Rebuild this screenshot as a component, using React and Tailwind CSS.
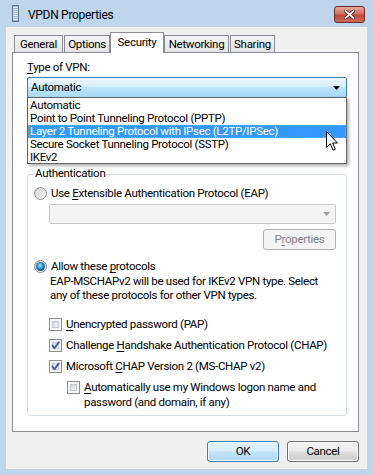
import React from "react";

function U({ children }) {
  return <span className="underline decoration-1 underline-offset-[2px]">{children}</span>;
}

function Radio({ checked }) {
  return (
    <span className="w-[13px] h-[13px] rounded-full border border-[#8e8f8f] bg-[linear-gradient(135deg,#c9cbcd,#fbfbfb)] flex items-center justify-center shrink-0">
      {checked ? (
        <span className="w-[9px] h-[9px] rounded-full bg-[radial-gradient(circle_at_45%_40%,#c8eeff_0%,#3fa4e6_30%,#1a5a9a_65%,#24476e_100%)]" />
      ) : (
        <span className="w-[9px] h-[9px] rounded-full bg-[linear-gradient(135deg,#d4d5d6,#f7f7f7)]" />
      )}
    </span>
  );
}

function Check({ checked }) {
  return (
    <span className="relative w-[13px] h-[13px] border border-[#8e8f8f] bg-[#f6f6f6] p-[2px] shrink-0 flex">
      <span className="flex-1 border border-[#c5c8cc] bg-[linear-gradient(135deg,#d3d6da,#f8f8f8)]" />
      {checked ? (
        <svg className="absolute left-0 top-0" width="11" height="11" viewBox="0 0 11 11">
          <path d="M2.5 5.5 L4.5 8.2 L8.8 2.4" fill="none" stroke="#3f5c9c" strokeWidth="1.8" strokeLinejoin="round" strokeLinecap="round" />
        </svg>
      ) : null}
    </span>
  );
}

function Tab({ children, w }) {
  return (
    <div
      className="h-[17px] border-t border-l border-r border-[#898c95] bg-[linear-gradient(#f5f5f5,#e4e4e4)] flex items-center justify-center"
      style={{ width: w }}
    >
      {children}
    </div>
  );
}

export default function App() {
  return (
    <div className="w-[373px] h-[475px] bg-[#bfd5ec] flex flex-col font-['Roboto',Arial,sans-serif] text-[11.5px] tracking-[-0.3px] leading-[15px] text-black overflow-hidden">
      {/* Title bar */}
      <div className="h-[27px] flex items-start shrink-0">
        <svg className="ml-[12px] mt-[5px]" width="7" height="17" viewBox="0 0 7 17">
          <rect x="0.5" y="0.5" width="6" height="16" fill="#9fb4cc" stroke="#5f7893" />
          <rect x="1" y="2" width="5" height="1" fill="#e7eef6" />
          <rect x="1" y="4" width="5" height="1" fill="#e7eef6" />
          <rect x="1" y="6" width="5" height="1" fill="#e7eef6" />
          <rect x="1" y="8" width="5" height="1" fill="#e7eef6" />
          <rect x="1" y="10" width="5" height="1" fill="#e7eef6" />
          <rect x="1" y="12" width="5" height="1" fill="#e7eef6" />
          <rect x="1" y="14" width="5" height="1" fill="#e7eef6" />
        </svg>
        <div className="ml-[9px] mt-[8px] text-[12px]">VPDN Properties</div>
        <div className="ml-auto mr-[8px] mt-[6px] w-[31px] h-[17px] rounded-[3px] border border-[#6e2a28] bg-[linear-gradient(#e8a899,#d0705f_45%,#c0483a_55%,#c96b58)] flex items-center justify-center">
          <svg width="11" height="9" viewBox="0 0 11 9">
            <path d="M1.5 1 L9.5 8 M9.5 1 L1.5 8" stroke="#4a1f1b" strokeWidth="3.4" strokeLinecap="square" />
            <path d="M1.5 1 L9.5 8 M9.5 1 L1.5 8" stroke="#ffffff" strokeWidth="1.8" strokeLinecap="square" />
          </svg>
        </div>
      </div>

      {/* Client area */}
      <div className="mx-[6px] w-[361px] h-[442px] bg-[#f0f0f0] flex flex-col">
        {/* Tabs */}
        <div className="mt-[5px] ml-[8px] h-[20px] flex items-end">
          <Tab w={49}>General</Tab>
          <div className="w-[1px]" />
          <Tab w={46}>Options</Tab>
          <div className="relative z-10 w-[54px] h-[21px] -mb-px border-t border-l border-r border-[#898c95] bg-white flex items-start justify-center pt-[2px]">
            Security
          </div>
          <Tab w={65}>Networking</Tab>
          <div className="w-[1px]" />
          <Tab w={45}>Sharing</Tab>
        </div>

        {/* Panel */}
        <div className="relative ml-[6px] w-[347px] h-[380px] border border-[#898c95] bg-white pl-[14px] flex flex-col">
          <div className="mt-[7px]">
            <U>T</U>ype of VPN:
          </div>
          <div className="mt-[2px] w-[320px] h-[21px] border border-[#3c7fb1] rounded-[2px] bg-[linear-gradient(#eaf6fd,#d9f0fc_45%,#bee6fd_50%,#a7d9f5)] flex items-center pl-[3px] pr-[6px]">
            <span>Automatic</span>
            <svg className="ml-auto" width="7" height="4" viewBox="0 0 7 4">
              <path d="M0 0 L7 0 L3.5 4 Z" fill="#000" />
            </svg>
          </div>

          {/* Authentication group */}
          <div className="relative mt-[76px] w-[320px] h-[242px] border border-[#d5dfe5] rounded-[3px] flex flex-col">
            <div className="absolute left-[6px] -top-[9px] bg-white px-[1px]">Authentication</div>

            <div className="mt-[11px] pl-[6px] flex items-center gap-[4px] h-[15px]">
              <Radio />
              <span>
                Use <U>E</U>xtensible Authentication Protocol (EAP)
              </span>
            </div>
            <div className="mt-[3px] ml-[21px] w-[287px] h-[20px] border border-[#c6cacd] rounded-[2px] bg-[#f4f4f4] flex items-center justify-end pr-[5px]">
              <svg width="7" height="4" viewBox="0 0 7 4">
                <path d="M0 0 L7 0 L3.5 4 Z" fill="#a0a0a0" />
              </svg>
            </div>
            <div className="mt-[5px] ml-auto mr-[10px] w-[73px] h-[21px] border border-[#adb2b5] rounded-[3px] bg-[#f4f4f4] text-[#838383] flex items-center justify-center">
              <span>
                P<U>r</U>operties
              </span>
            </div>

            <div className="mt-[9px] pl-[6px] flex items-center gap-[4px] h-[15px]">
              <Radio checked />
              <span>
                Allow these <U>p</U>rotocols
              </span>
            </div>
            <div className="pl-[22px] leading-[14px] whitespace-nowrap">
              <div>EAP-MSCHAPv2 will be used for IKEv2 VPN type. Select</div>
              <div>any of these protocols for other VPN types.</div>
            </div>

            <div className="mt-[15px] pl-[21px] flex items-center gap-[4px] h-[15px] whitespace-nowrap">
              <Check />
              <span>
                <U>U</U>nencrypted password (PAP)
              </span>
            </div>
            <div className="mt-[6px] pl-[21px] flex items-center gap-[4px] h-[15px] whitespace-nowrap">
              <Check checked />
              <span>
                Challenge <U>H</U>andshake Authentication Protocol (CHAP)
              </span>
            </div>
            <div className="mt-[6px] pl-[21px] flex items-center gap-[4px] h-[15px] whitespace-nowrap">
              <Check checked />
              <span>
                Microsoft <U>C</U>HAP Version 2 (MS-CHAP v2)
              </span>
            </div>
            <div className="mt-[6px] pl-[39px] flex items-start gap-[4px] whitespace-nowrap">
              <span className="mt-[1px] flex">
                <Check />
              </span>
              <div>
                <div>
                  <U>A</U>utomatically use my Windows logon name and
                </div>
                <div>password (and domain, if any)</div>
              </div>
            </div>
          </div>

          {/* Dropdown list (open) */}
          <div className="absolute left-[14px] top-[44px] w-[320px] h-[67px] border border-[#646464] bg-white leading-[13px] shadow-[2px_2px_3px_rgba(0,0,0,0.3)] pt-[1px] whitespace-nowrap">
            <div className="h-[13px] pl-[2px]">Automatic</div>
            <div className="h-[13px] pl-[2px]">Point to Point Tunneling Protocol (PPTP)</div>
            <div className="h-[13px] pl-[2px] bg-[#3399ff] text-white outline-1 outline-dotted outline-[#d89a5a] -outline-offset-1">
              Layer 2 Tunneling Protocol with IPsec (L2TP/IPSec)
            </div>
            <div className="h-[13px] pl-[2px]">Secure Socket Tunneling Protocol (SSTP)</div>
            <div className="h-[13px] pl-[2px]">IKEv2</div>
          </div>

          {/* Mouse cursor */}
          <svg className="absolute left-[313px] top-[78px]" width="13" height="21" viewBox="0 0 13 21">
            <path
              d="M0.5 0.5 L0.5 16.5 L4.3 12.8 L7 19.2 L9.3 18.2 L6.7 12 L11.5 12 Z"
              fill="#ffffff"
              stroke="#000000"
              strokeWidth="1"
              strokeLinejoin="round"
            />
          </svg>
        </div>

        {/* Buttons */}
        <div className="mt-[9px] flex justify-end gap-[8px] pr-[8px]">
          <div className="w-[72px] h-[21px] rounded-[3px] border border-[#3c7fb1] bg-[linear-gradient(#e5f4fd,#d3edfb_48%,#bfe2f6_52%,#b3daf2)] shadow-[inset_0_0_0_1px_#e8f6fd] flex items-center justify-center">
            OK
          </div>
          <div className="w-[72px] h-[21px] rounded-[3px] border border-[#707070] bg-[linear-gradient(#f2f2f2,#ebebeb_48%,#dddddd_52%,#cfcfcf)] shadow-[inset_0_0_0_1px_#fcfcfc] flex items-center justify-center">
            Cancel
          </div>
        </div>
      </div>
    </div>
  );
}
